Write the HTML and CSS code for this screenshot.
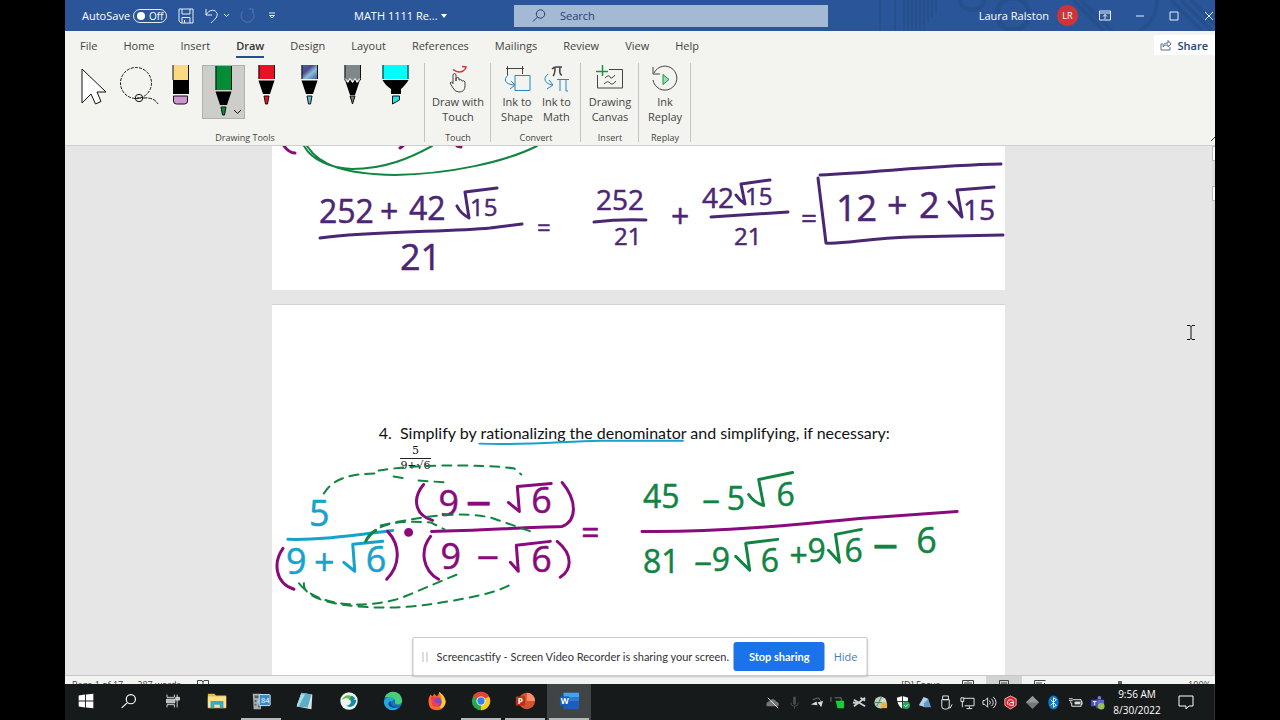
FILE: index.html
```html
<!DOCTYPE html>
<html lang="en">
<head>
<meta charset="utf-8">
<title>MATH 1111 Review - Word</title>
<link rel="stylesheet" href="styles.css">
</head>
<body>
<div class="screen">
  <header class="titlebar">
    <svg class="titlebar-art" viewBox="0 0 360 31" preserveAspectRatio="xMaxYMid slice" aria-hidden="true">
      <g fill="none" stroke="#264f8e" stroke-width="2">
        <path d="M25 0v31M40 0v31M49 0v31M53 0v31M57 0v31M61 0v31M65 0v31M69 0v31M73 0v22M77 0v18M81 0v14"/>
        <circle cx="158" cy="14" r="16" stroke-width="5"/><path d="M105 0a12 10 0 0 0 24 0" stroke-width="4"/>
        <path d="M218 0l31 31M226 0l31 31M316 0l31 31M326 0l31 31M336 0l24 24M284 31q18-10 18-31" stroke-width="4"/>
      </g>
    </svg>
    <div class="quick">
      <label class="autosave">AutoSave <button class="toggle" type="button"><i></i>Off</button></label>
      <button class="bare save" type="button" aria-label="Save"><svg width="16" height="16" viewBox="0 0 16 16"><path d="M1 1h14v14H3l-2-2zM4 1v5h8V1M4 15V9.500h8V15M6.500 15v-3" /></svg></button>
      <button class="bare undo" type="button" aria-label="Undo"><svg width="28" height="16" viewBox="0 0 28 16"><path d="M2 1v6h6M2 7C5 1 12 1 13 5.500 14 9 11 11 7 15M20 6l2.500 2.500L25 6"/></svg></button>
      <button class="bare redo" type="button" aria-label="Redo"><svg width="16" height="16" viewBox="0 0 16 16"><path d="M10 1h4v4M13 3a6.500 6.500 0 1 1-9 0"/></svg></button>
      <button class="bare more" type="button" aria-label="Customize"><svg width="8" height="8" viewBox="0 0 8 8"><path d="M1 1h6M1.500 3.500h5L4 6z"/></svg></button>
    </div>
    <button class="doc-name" type="button">MATH 1111 Re... <svg width="6" height="4" viewBox="0 0 6 4"><path d="M0 0h6L3 4z" fill="#fff"/></svg></button>
    <label class="search"><svg width="14" height="14" viewBox="0 0 14 14"><circle cx="8.500" cy="5" r="4.200"/><path d="M5.500 8L1 12.500"/></svg><input type="text" placeholder="Search" aria-label="Search"></label>
    <div class="account">
      <span>Laura Ralston</span><span class="avatar">LR</span>
      <button class="bare ropt" type="button" aria-label="Ribbon options"><svg width="12" height="11" viewBox="0 0 12 11"><path d="M.5 1h11v9H.5zM.5 3h11M6 9V4.500M4 6.500l2-2 2 2"/></svg></button>
      <button class="bare min" type="button" aria-label="Minimize"><svg width="10" height="10" viewBox="0 0 10 10"><path d="M1 5h8"/></svg></button>
      <button class="bare max" type="button" aria-label="Maximize"><svg width="10" height="10" viewBox="0 0 10 10"><path d="M1 1h8v8H1z"/></svg></button>
      <button class="bare close" type="button" aria-label="Close"><svg width="10" height="10" viewBox="0 0 10 10"><path d="M1 1l8 8M9 1L1 9"/></svg></button>
    </div>
  </header>

  <nav class="tabs">
    <a href="#">File</a><a href="#">Home</a><a href="#">Insert</a><a href="#" class="active">Draw</a><a href="#">Design</a><a href="#">Layout</a><a href="#">References</a><a href="#">Mailings</a><a href="#">Review</a><a href="#">View</a><a href="#">Help</a>
    <button class="share" type="button"><svg width="12" height="12" viewBox="0 0 12 12"><path d="M3 5H1v6h9V8M3 8c0-3 2-4 5-4V1.500L11 5 8 8V6C6 6 4 6 3 8z"/></svg>Share</button>
  </nav>

  <section class="ribbon">
    <div class="group drawing">
      <div class="tools">
        <button class="tool" type="button" aria-label="Select"><svg width="43" height="54" viewBox="0 0 43 54"><path d="M9 4v34l9-9 4.500 10 5.500-2.500L24 27h9z" fill="#fff" stroke="#111"/></svg></button>
        <button class="tool" type="button" aria-label="Lasso"><svg width="43" height="54" viewBox="0 0 43 54"><g fill="none" stroke="#111"><circle cx="20" cy="18" r="15.500" stroke-dasharray="3 1.200"/><circle cx="23" cy="33" r="3.700"/><path d="M21 33h4M27 33q11-1 15 6" stroke-dasharray="4 1"/></g></svg></button>
        <button class="tool" type="button" aria-label="Eraser"><svg width="43" height="54" viewBox="0 0 43 54"><path d="M14 0h16v15H14z" fill="#f9d982"/><path d="M14 0v15M29.500 0v15" stroke="#111"/><path d="M14 15h16v14H14z"/><path d="M14.500 31h14v5q0 3-3 3h-8q-3 0-3-3z" fill="#d295d3" stroke="#111"/></svg></button>
        <button class="tool selected" type="button" aria-label="Green pen"><svg width="43" height="54" viewBox="0 0 43 54"><path d="M13.500 0h16v25h-16z" fill="#058c36"/><path d="M14 0v25M29.500 0v25" stroke="#111"/><path d="M13.500 26.500h16L25 40h-7z"/><path d="M19 42h5l-1.500 8h-2z" fill="#058c36" stroke="#111"/><path d="M32 45l3.500 3.500L39 45" fill="none" stroke="#111"/></svg></button>
        <button class="tool" type="button" aria-label="Red pen"><svg width="43" height="54" viewBox="0 0 43 54"><path d="M13.500 0h16v14h-16z" fill="#e71224"/><path d="M14 0v14M29.500 0v14" stroke="#111"/><path d="M13.500 15.500h16L25 29h-7z"/><path d="M19 31h5l-1.500 8h-2z" fill="#e71224" stroke="#111"/></svg></button>
        <button class="tool" type="button" aria-label="Galaxy pen"><svg width="43" height="54" viewBox="0 0 43 54"><defs><linearGradient id="gal" x1="0" y1="0" x2="1" y2="1"><stop offset="0" stop-color="#2d70a8"/><stop offset=".35" stop-color="#544788"/><stop offset=".6" stop-color="#85c1db"/><stop offset="1" stop-color="#4a528f"/></linearGradient></defs><path d="M13.500 0h16v14h-16z" fill="url(#gal)"/><path d="M14 0v14M29.500 0v14" stroke="#111"/><path d="M13.500 15.500h16L25 29h-7z"/><path d="M19 31h5l-1.500 8h-2z" fill="#69b6d7" stroke="#111"/></svg></button>
        <button class="tool" type="button" aria-label="Pencil"><svg width="43" height="54" viewBox="0 0 43 54"><path d="M13.500 0h16v16h-16z" fill="#808789"/><path d="M14 0v15M29.500 0v15" stroke="#111"/><path d="M14 15l3 3 2-3 2.500 3 2.500-3 2 3 3-3-5 15h-5z" fill="#000"/><path d="M14 13.500l3 3 2-3 2.500 3 2.500-3 2 3 3-3" fill="none" stroke="#fff"/><path d="M19 31h5l-2.500 8z" fill="#777" stroke="#111"/></svg></button>
        <button class="tool" type="button" aria-label="Highlighter"><svg width="43" height="54" viewBox="0 0 43 54"><path d="M8.500 0h26v14h-26z" fill="#00fdff"/><path d="M9 0v14M34 0v14" stroke="#111"/><path d="M8.500 15h26q-2 4-7.500 9v5H17v-5q-6-4-8.500-9z"/><path d="M18.500 31h7v4l-7 4z" fill="#27dfe4" stroke="#111"/></svg></button>
      </div>
      <div class="group-label">Drawing Tools</div>
    </div>
    <div class="group touch">
      <div class="cmds"><button class="cmd" type="button"><svg width="28" height="28" viewBox="0 0 28 28"><path d="M9 4.500q5 4 10 1.500 3-2 3-4l-4-.5" stroke="#d13438" stroke-width="1.500"/><path d="M9 19V9.500q1.500-2 3 0V16v-3q2-1 3 0v2q2-1 3 .5V16q2-1 3 1v4q0 6-6 6-4 0-6-4l-3-5q1-2 3 0"/></svg>Draw with<br>Touch</button></div>
      <div class="group-label">Touch</div>
    </div>
    <div class="group convert">
      <div class="cmds">
        <button class="cmd" type="button"><svg width="28" height="28" viewBox="0 0 28 28"><path d="M3 3.500h18M4.500 1v9M19.500 1v8"/><path d="M12 10.500h15v15H12zM5 10c-5 5-3 9 6 10M8 16l4 4-5 4" stroke="#2486c4" fill="#f3f3ef"/></svg>Ink to<br>Shape</button>
        <button class="cmd" type="button"><svg width="28" height="28" viewBox="0 0 28 28"><path d="M10 4q2-2 4-2h6M13 3q0 6-2 8M18 2q-1 8 2 8" stroke-width="1.500"/><path d="M6 9c-5 4-4 9 4 11M7 15l4 5-6 4M15 14.500h12M18 15v11M24 15v11h2" stroke="#2486c4"/></svg>Ink to<br>Math</button>
      </div>
      <div class="group-label">Convert</div>
    </div>
    <div class="group insert">
      <div class="cmds"><button class="cmd" type="button"><svg width="28" height="28" viewBox="0 0 28 28"><path d="M1.500 10v13h25V4.500H13M9 13q4-4 5-1t5-2M8 19q4-4 6-1t6-2"/><path d="M6.500 0v11M0 6.500h12" stroke="#149447" stroke-width="1.500"/></svg>Drawing<br>Canvas</button></div>
      <div class="group-label">Insert</div>
    </div>
    <div class="group replay">
      <div class="cmds"><button class="cmd" type="button"><svg width="28" height="28" viewBox="0 0 28 28"><path d="M2 2v7h7M3 8a12 12 0 1 1-1 7"/><path d="M12 9.500l6 5-6 5z" stroke="#149447" fill="#a5dcb7"/></svg>Ink<br>Replay</button></div>
      <div class="group-label">Replay</div>
    </div>
    <svg class="collapse" width="5" height="6" viewBox="0 0 5 6"><path d="M1 5l4-4" stroke="#333" fill="none"/></svg>
  </section>

  <main class="workspace">
    <div class="pages">
      <article class="page first">
        <svg class="ink" viewBox="272 146 733 144" preserveAspectRatio="xMidYMin meet">
          <g class="green"><path class="arc" d="M304 146C312 160 330 168 352 169 385 169 410 158 432 146M307 146C320 166 345 174 395 175 450 174 505 162 537 146"/></g>
          <g class="purple"><path d="M284 146q5 7 11 7M403 146l-3 2M457 146l4 1"/></g>
          <g class="violet">
            <path d="M320 238C370 231 450 232 490 228L522 224M457 206q3 7 12 12L465 192l32-4"/>
            <path d="M594 222q25-3 52-2M711 217l77-5M736 195q4 6 9 9l-4-20 29-4"/>
            <path d="M820 175C880 172 940 165 1001 164M818 178l8 65C840 245 870 238 910 237S960 236 1003 235M949 202l13 15-5-27 37-3"/>
            <text class="s32" x="319" y="223">252</text><text class="s32" x="380" y="223">+</text><text class="s32" x="409" y="220">42</text><text class="s24" x="470" y="216">15</text>
            <text class="s36" x="400" y="270">21</text><text class="s24" x="537" y="236">=</text>
            <text class="s28" x="596" y="210">252</text><text class="s24" x="614" y="245">21</text><text class="s32" x="671" y="228">+</text>
            <text class="s28" x="702" y="208">42</text><text class="s24" x="745" y="205">15</text><text class="s24" x="734" y="245">21</text><text class="s28" x="801" y="228">=</text>
            <text class="s36" x="836" y="221">12</text><text class="s36" x="887" y="218">+</text><text class="s36" x="919" y="218">2</text><text class="s28" x="963" y="220">15</text>
          </g>
        </svg>
      </article>
      <article class="page second">
        <ol start="4"><li>Simplify by rationalizing the denominator and simplifying, if necessary:
          <div class="fraction"><span>5</span><span>9+√6</span></div></li></ol>
        <svg class="ink" viewBox="272 304 733 371" preserveAspectRatio="xMidYMin meet">
          <g class="blue">
            <path class="underline" d="M479 443C520 445 560 441 600 440L683 440"/>
            <path d="M287 539C320 540 350 535 392 530M343 562l11 9-2-27 30-3"/>
            <text class="s36" x="308" y="526">5</text><text class="s36" x="285" y="574">9</text><text class="s36" x="313" y="575">+</text><text class="s36" x="365" y="572">6</text>
          </g>
          <g class="purple">
            <path d="M282 548C272 562 274 583 293 589M387 531C400 545 400 565 386 579M423 484C412 497 413 514 432 520M508 502l11 9-2-25 34-3M562 482C577 500 577 520 562 526 520 527 480 530 431 531M430 536C419 550 422 570 438 579M510 562l8 9-2-26 34-4M557 541C574 555 571 570 560 577M642 531C720 532 800 524 860 518L958 511"/>
            <circle cx="408" cy="532" r="3" fill="#890a7d"/>
            <text class="s36" x="438" y="516">9</text><text class="s46" x="465" y="520">−</text><text class="s36" x="531" y="513">6</text>
            <text class="s36" x="440" y="569">9</text><text class="s40" x="476" y="572">−</text><text class="s36" x="531" y="572">6</text><text class="s32" x="581" y="544">=</text>
          </g>
          <g class="green">
            <path class="dash" d="M323 493C332 478 350 473 375 473M378 470C425 462 500 465 514 468L521 474M393 476L405 478M418 480L447 482M368 537C378 522 400 520 430 522L444 529M380 525C425 515 460 511 490 517L536 533M298 583C315 605 360 610 400 598L457 574M303 583C300 606 380 612 430 604 470 598 500 592 514 582"/>
            <path d="M365 541q3-7 10-11M749 494q5 8 15 11l-5-26 34-7M736 556l14 14-4-27 32-4M829 550l11 12-4-28 26-5"/>
            <text class="s32" x="643" y="508">45</text><text class="s32" x="702" y="513">−</text><text class="s32" x="727" y="510">5</text><text class="s32" x="777" y="506">6</text>
            <text class="s32" x="643" y="573">81</text><text class="s32" x="694" y="575">−</text><text class="s32" x="712" y="571">9</text><text class="s32" x="761" y="572">6</text><text class="s32" x="790" y="567">+</text><text class="s32" x="808" y="562">9</text><text class="s32" x="845" y="562">6</text><text class="s46" x="873" y="563">−</text><text class="s36" x="917" y="553">6</text>
          </g>
        </svg>
      </article>
    </div>
    <div class="scrollbar"><i></i><i></i></div>
    <svg class="ibeam" width="8" height="15" viewBox="0 0 8 15"><path d="M0 .5h3l1 1 1-1h3M4 1v13M0 14.500h3l1-1 1 1h3" fill="none" stroke="#111"/></svg>
  </main>

  <footer class="status">
    <span>Page 1 of 17</span><span>287 words</span>
    <svg width="12" height="8" viewBox="0 0 12 8"><path d="M.5 8V.5H5L6 2l1-1.500h4.500V8M6 1v7"/></svg>
    <span class="focus">[D] Focus</span>
    <span class="view"><svg width="12" height="8" viewBox="0 0 12 8"><path d="M.5 8V.5h11V8M6 1v7M2 3h3M7 3h3"/></svg></span>
    <span class="view on"><svg width="10" height="8" viewBox="0 0 10 8"><path d="M.5 8V.5h9V8M2 3h6"/></svg></span>
    <span class="view"><svg width="12" height="8" viewBox="0 0 12 8"><path d="M.5 8V.5h11M2 3h6M8 6l3-3"/></svg></span>
    <i class="thumb"></i><span class="zoom">100%</span>
  </footer>

  <div class="sharing" role="status">
    <i class="grip"></i><span>Screencastify - Screen Video Recorder is sharing your screen.</span>
    <button class="stop" type="button">Stop sharing</button><a href="#">Hide</a>
  </div>

  <div class="taskbar">
    <div class="apps">
      <button type="button" aria-label="Start"><svg viewBox="0 0 24 24"><path d="M4 6l7-1v6.500H4zM12 5l8-1v7.500h-8zM4 12.500h7V19l-7-1zM12 12.500h8V20l-8-1z" fill="#fff"/></svg></button>
      <button type="button" aria-label="Search"><svg viewBox="0 0 24 24"><g fill="none" stroke="#fff" stroke-width="1.300"><circle cx="14" cy="10" r="5"/><path d="M10 14l-6 5.500"/></g></svg></button>
      <button type="button" aria-label="Task view"><svg viewBox="0 0 24 24"><g fill="none" stroke="#ddd"><path d="M5.500 5v3h8V5M5.500 19v-3h8v3M16.500 5v14"/><path d="M5 10h9v4H5zM15 8h4v3h-4z" fill="#bbb"/></g></svg></button>
      <button type="button" aria-label="File Explorer"><svg viewBox="0 0 24 24"><path d="M2 4h7l2 2h11v14H2z" fill="#e8b84b"/><path d="M2 7h20v12H2z" fill="#ffe08a"/><path d="M5 12h14v8h-4v-4H9v4H5z" fill="#3aa9c9"/></svg></button>
      <button class="open" type="button" aria-label="Calculator"><svg viewBox="0 0 24 24"><path d="M3 4h9v17H4z" fill="#a9b0b3"/><path d="M5 6h5v3H5zM5 11h2v2H5zM5 15h2v2H5zM9 15h2v4H9z" fill="#596367"/><rect x="10" y="5" width="12" height="12" rx="1" fill="#3688c9" stroke="#d8eefa"/><text x="12" y="14" class="tiny">84</text></svg></button>
      <button type="button" aria-label="Notes"><svg viewBox="0 0 24 24"><path d="M8 3l12 2-1 16-16-3z" fill="#d9e4e7"/><path d="M8 3l11 2-4 14-12-1z" fill="#5daec7"/><path d="M8 4l4 1-7 13-2-1z" fill="#a6dfeb"/></svg></button>
      <button type="button" aria-label="Connect"><svg viewBox="0 0 24 24"><circle cx="12" cy="12" r="9.500" fill="#eef5ef"/><path d="M4 11C7 4 15 4 17 10l2 4-5-1c-1-5-6-5-10-2z" fill="#69b745"/><path d="M20 11c-1 8-8 9-11 6 4 0 6-3 5-7l-2 1 3-5 4 3-2 1z" fill="#1489a5"/></svg></button>
      <button type="button" aria-label="Edge"><svg viewBox="0 0 24 24"><circle cx="12" cy="12" r="10" fill="#1475bd"/><path d="M3 8C7-1 21 0 22 12c0 4-7 5-8 2 2-4-3-7-11-6z" fill="#47cf77"/><path d="M2 13c2-7 10-6 11-2-5 1-4 8 5 8C12 25 3 21 2 13z" fill="#23a9dc"/><path d="M10 12q-2 7 9 6-8 4-12-2 0-4 3-4z" fill="#0b4d94"/></svg></button>
      <button type="button" aria-label="Firefox"><svg viewBox="0 0 24 24"><path d="M5 5l2 2 2-3 3 3 3-5 3 5q4 3 3 8-2 7-9 7-8 0-9-7-1-6 2-10z" fill="#ff6a27"/><path d="M14 2q9 6 7 13-2 5-6 5 5-8-1-18z" fill="#ffcb35"/><circle cx="12" cy="13" r="5" fill="#794bc0"/><path d="M5 8q5-2 8 1-4 0-4 3 2 4 6 2-2 6-8 3z" fill="#f43b56"/></svg></button>
      <button class="open" type="button" aria-label="Chrome"><svg viewBox="0 0 24 24"><circle cx="12" cy="12" r="10" fill="#25a94c"/><path d="M12 12L3.300 7A10 10 0 0 1 20.700 7z" fill="#e94334"/><path d="M12 12l8.700-5A10 10 0 0 1 12 22z" fill="#fbc917"/><circle cx="12" cy="12" r="5" fill="#fff"/><circle cx="12" cy="12" r="4" fill="#367fee"/></svg></button>
      <button class="open" type="button" aria-label="PowerPoint"><svg viewBox="0 0 24 24"><circle cx="14" cy="12" r="9" fill="#d35230"/><path d="M14 3a9 9 0 0 1 9 9h-9z" fill="#ff8f6b"/><path d="M2 7h10v10H2z" fill="#b53519"/><text x="4" y="15" class="badge">P</text></svg></button>
      <button class="open active" type="button" aria-label="Word"><svg viewBox="0 0 24 24"><path d="M6 3h17v18H6z" fill="#1b5ebe"/><path d="M6 3h17v5H6z" fill="#41a5ee"/><path d="M6 8h17v4H6z" fill="#2b7cd3"/><path d="M2 7h10v10H2z" fill="#185abd"/><text x="3" y="15" class="badge">W</text></svg></button>
    </div>
    <div class="tray">
      <svg viewBox="0 0 16 16"><path d="M2 12h12q2-4-2-5-3-5-7-1-5 2-3 6z" fill="#777"/><path d="M3 3l11 11" stroke="#eee"/></svg>
      <svg viewBox="0 0 16 16"><path d="M8 3v6" stroke="#4d4d4d" stroke-width="3" stroke-linecap="round"/><path d="M4 8q0 4 4 4t4-4M8 12v3" fill="none" stroke="#4d4d4d"/></svg>
      <svg viewBox="0 0 16 16"><path d="M2 10l6-3 1 4zM9 8l6-2-2 7-2-3z" fill="#ddd"/><path d="M4 5l6-2 3 4" stroke="#777" fill="none"/></svg>
      <svg viewBox="0 0 16 16"><path d="M1 2v5M5 3h7v4" stroke="#777" fill="none"/><path d="M6 6h9v8H8z" fill="#16cf32"/></svg>
      <svg viewBox="0 0 16 16"><path d="M2 5l12 7M2 12L14 3M1 8l6 1M9 3l5 3" stroke="#ccc" stroke-width="2"/></svg>
      <svg viewBox="0 0 16 16"><circle cx="8" cy="8" r="6.500" fill="#b8cfbe"/><path d="M4 12L9 2M2 8h8" stroke="#478260"/><path d="M9 8h6v6H9z" fill="#efad3e"/><path d="M10 8V5h3v3" stroke="#eee" fill="none"/></svg>
      <svg viewBox="0 0 16 16"><path d="M8 1l6 2q0 8-6 12Q2 11 2 3z" fill="#fff"/><path d="M8 1v14M2 7h12" stroke="#222"/><circle cx="12" cy="11" r="4" fill="#24a55a"/><path d="M10 11l1.500 1.500L14 10" stroke="#fff" fill="none"/></svg>
      <svg viewBox="0 0 16 16"><path d="M2 11l5-9 5 2-3 9z" fill="#b6d1e5"/><path d="M7 9l5-5 3 9H8z" fill="#6798ca"/></svg>
      <svg viewBox="0 0 16 16"><path d="M5 1h6v4H5zM4 5h8v7q0 3-3 3H7q-3 0-3-3zM11 13l2 1 2-4" fill="none" stroke="#eee"/></svg>
      <svg viewBox="0 0 16 16"><path d="M4 3.500h11v8H5M7 14.500h6M10 12v2M1 3h3v4H1zM2.500 7v6" fill="none" stroke="#eee"/></svg>
      <svg viewBox="0 0 16 16"><path d="M1 6h2l3-3v10l-3-3H1zM8 6q2 2 0 4M10 4q4 4 0 8M12 2q6 6 0 12" fill="none" stroke="#eee"/></svg>
      <svg viewBox="0 0 16 16"><path d="M8 1l6 3v7l-6 4-6-4V4z" fill="#d7222e" stroke="#f6b3b5"/><path d="M5 10V7q0-2 3-2t3 2v4H8q-3 0 0-3h3" fill="none" stroke="#fff"/></svg>
      <svg viewBox="0 0 16 16"><path d="M8 1l7 7-7 7-7-7z" fill="#777"/><path d="M8 1l7 7H1z" fill="#999"/></svg>
      <svg viewBox="0 0 16 16"><ellipse cx="8" cy="8" rx="5.500" ry="7.500" fill="#087bd1"/><path d="M5 5l6 6-3 2V3l3 2-6 6" fill="none" stroke="#fff"/></svg>
      <svg viewBox="0 0 16 16"><path d="M5 5h9v7H4V8M14 7h1v3h-1M1 4h4M1 6h4M3 7v2" fill="none" stroke="#eee"/><path d="M7 7h6v3H7z" fill="#ddd"/></svg>
      <svg viewBox="0 0 16 16"><circle cx="10" cy="3" r="2" fill="#777de0"/><path d="M6 5h9v9H7z" fill="#6464bd"/><path d="M1 5h7v7H1z" fill="#4b50b1"/><path d="M3 7h4M5 7v4" stroke="#fff"/><circle cx="12" cy="12" r="3.500" fill="#92c353"/></svg>
    </div>
    <div class="clock"><span>9:56 AM</span><span>8/30/2022</span></div>
    <button class="notify" type="button" aria-label="Notifications"><svg width="16" height="16" viewBox="0 0 16 16"><path d="M1 2h14v10h-4l-3 3v-3H1z" fill="none" stroke="#fff"/></svg></button>
  </div>
</div>
</body>
</html>
```

FILE: styles.css
```css
* { box-sizing: border-box; }
body { margin: 0; background: #000; font-family: "Open Sans", "Noto Sans", sans-serif; font-size: 11px; color: #444; }
button { font: inherit; color: inherit; border: 0; padding: 0; background: none; }
a { color: inherit; text-decoration: none; }
svg { display: block; flex: none; }
.screen { position: relative; display: flex; flex-direction: column; min-height: 100vh; margin: 0 65px; overflow: hidden; }

.titlebar { position: relative; display: flex; align-items: center; height: 31px; padding-left: 17px; background: #2a5699; color: #fff; }
.titlebar-art { position: absolute; top: 0; right: 0; width: 360px; height: 31px; }
.titlebar .bare svg { fill: none; stroke: #e5edf8; }
.quick { display: flex; align-items: center; width: 272px; }
.autosave { display: flex; align-items: center; gap: 3px; white-space: nowrap; }
.toggle { display: flex; align-items: center; gap: 4px; width: 34px; height: 14px; padding: 0 3px; border: 1px solid #e5edf8; border-radius: 7px; font-size: 10px; line-height: 12px; }
.toggle i { width: 8px; height: 8px; border-radius: 50%; background: #fff; flex: none; }
.save { margin-left: 11px; }
.undo { margin-left: 10px; }
.redo { margin-left: 7px; opacity: .2; }
.more { margin-left: 13px; }
.doc-name { display: flex; align-items: center; gap: 3px; width: 160px; white-space: nowrap; }
.search { display: flex; align-items: center; gap: 14px; flex: 0 1 314px; height: 22px; padding-left: 18px; background: #a4b9d3; }
.search svg { fill: none; stroke: #234378; }
.search input { flex: 1; min-width: 0; border: 0; padding: 0; background: none; font: inherit; color: #234378; }
.search input::placeholder { color: #234378; opacity: 1; }
.account { position: relative; display: flex; align-items: center; margin-left: auto; }
.avatar { display: grid; place-items: center; width: 21px; height: 21px; margin-left: 8px; border-radius: 50%; background: #d03438; font-size: 9px; }
.ropt { margin-left: 21px; }
.min { margin-left: 24px; }
.max { margin-left: 24px; }
.close { margin: 0 1px 0 25px; }

.tabs { display: flex; align-items: center; gap: 26px; height: 32px; padding-left: 15px; background: #f3f3ef; white-space: nowrap; }
.tabs a { line-height: 20px; border-bottom: 2px solid transparent; }
.tabs .active { border-color: #2b4f8c; font-weight: 600; color: #333; }
.share { display: flex; align-items: center; gap: 5px; height: 20px; margin: -4px 0 0 auto; padding: 0 7px 0 6px; background: #fff; color: #264478; font-weight: 600; }
.share svg { fill: none; stroke: #5d6e8d; }

.ribbon { position: relative; display: flex; height: 83px; background: #f3f3ef; border-bottom: 1px solid #cfcfcf; }
.group { position: relative; display: flex; flex-direction: column; justify-content: space-between; }
.group::after { content: ""; position: absolute; right: 0; top: 0; bottom: 3px; width: 1px; background: #c4c4c2; }
.drawing { width: 360px; }
.touch { width: 66px; }
.convert { width: 90px; }
.insert { width: 58px; }
.replay { width: 52px; }
.tools { display: flex; padding: 2px 0 0 8px; }
.tool.selected { background: #cdcdca; outline: 1px solid #b0b0ae; outline-offset: -1px; }
.group-label { font-size: 9px; line-height: 14px; text-align: center; }
.cmds { display: flex; justify-content: center; gap: 9px; }
.cmd { display: flex; flex-direction: column; align-items: center; padding-top: 2px; line-height: 15px; text-align: center; white-space: nowrap; }
.cmd svg { margin-bottom: 1px; fill: none; stroke: #444; }
.collapse { position: absolute; right: 0; bottom: 3px; }

.workspace { position: relative; flex: 1; display: flex; background: #e6e6e6; overflow: hidden; }
.pages { flex: 1; display: flex; flex-direction: column; align-items: center; gap: 14px; }
.page { position: relative; width: 100%; max-width: 733px; background: #fff; }
.first { height: 144px; }
.second { flex: 1; padding: 118px 0 0 107px; border-top: 1px solid #d4d4d4; }
.second ol { margin: 0; padding-left: 17px; font: 16px/20px Lato, sans-serif; font-variant-ligatures: none; color: #111; white-space: nowrap; }
.second li { padding-left: 4px; }
.fraction { display: grid; justify-items: center; width: 31px; margin-top: 1px; font: 11px/14px "DejaVu Serif", serif; }
.fraction span { width: 100%; text-align: center; }
.fraction span + span { border-top: 1px solid #222; }
.ink { position: absolute; inset: 0; width: 100%; height: 100%; font-family: "Open Sans", sans-serif; }
.ink path { fill: none; stroke-width: 3; stroke-linecap: round; stroke-linejoin: round; }
.ink .dash { stroke-width: 2; stroke-dasharray: 9 7; }
.ink .underline, .ink .arc { stroke-width: 2; }
.green { fill: #118441; stroke: #118441; }
.purple { fill: #890a7d; stroke: #890a7d; }
.violet { fill: #4b2674; stroke: #4b2674; }
.blue { fill: #16a2cb; stroke: #16a2cb; }
.ink circle { stroke-width: 3; }
.ink text { stroke-width: 0.5; stroke-linejoin: round; }
.s24 { font-size: 24px; }
.s28 { font-size: 28px; }
.s32 { font-size: 32px; }
.s36 { font-size: 36px; }
.s40 { font-size: 40px; }
.s46 { font-size: 46px; }
.scrollbar { display: flex; flex-direction: column; gap: 25px; width: 3px; background: #dcdcdc; }
.scrollbar i { height: 15px; background: #fff; border: 1px solid #bbb; border-right: 0; }
.ibeam { position: absolute; right: 20px; top: 179px; }

.status { display: flex; align-items: flex-start; height: 9px; padding: 0 4px 0 7px; background: #f3f3f1; border-top: 1px solid #c8c8c4; font-size: 9px; line-height: 18px; overflow: hidden; white-space: nowrap; }
.status span + span { margin-left: 14px; }
.status svg { margin: 4px 0 0 16px; fill: none; stroke: #444; }
.status .focus { margin-left: auto; }
.status .view { display: flex; justify-content: center; width: 36px; height: 9px; margin-left: 0; }
.status .focus + .view { margin-left: 10px; }
.status .view svg { margin: 4px 0 0; }
.status .on { background: #d2d2d0; }
.status .thumb { width: 4px; height: 8px; margin: 5px 0 0 60px; background: #666; }
.status .zoom { margin-left: 66px; }

.sharing { position: absolute; left: 50%; bottom: 44px; transform: translateX(-50%); display: flex; align-items: center; width: 455px; height: 39px; padding: 0 9px; background: #fff; border: 1px solid #ccc; border-radius: 2px; box-shadow: 0 1px 2px #0003; white-space: nowrap; color: #333; }
.sharing span { font: 11px/16px Lato, sans-serif; }
.grip { width: 5px; height: 10px; margin-right: 9px; border: solid #bbb; border-width: 0 1px; }
.stop { flex: none; width: 91px; height: 29px; margin-left: auto; border-radius: 3px; background: #1a73e8; color: #fff; font: 700 11px/16px Lato, sans-serif; }
.sharing a { margin-left: 9px; color: #477bbd; }

.taskbar { display: flex; height: 36px; background: #171a1a; border-right: 1px solid #333; color: #fff; }
.apps { display: flex; }
.apps button { display: grid; place-items: center; width: 44px; border-bottom: 2px solid transparent; }
.apps button:first-child { width: 42px; }
.apps svg { width: 22px; height: 22px; }
.apps .open { border-image: linear-gradient(90deg, transparent 4px, #b5b9bb 4px, #b5b9bb 40px, transparent 40px) 2; }
.apps .active { background: #414444; }
.tiny { font-size: 8px; fill: #fff; }
.badge { font-size: 9px; font-weight: 700; fill: #fff; }
.tray { display: grid; grid-template-columns: repeat(16, 1fr); place-items: center; width: 346px; margin-left: auto; }
.tray svg { width: 15px; height: 15px; }
.clock { display: flex; flex-direction: column; align-items: center; justify-content: center; width: 58px; font-size: 10px; line-height: 16px; }
.notify { display: grid; place-items: center; width: 40px; margin-right: 8px; }
```
